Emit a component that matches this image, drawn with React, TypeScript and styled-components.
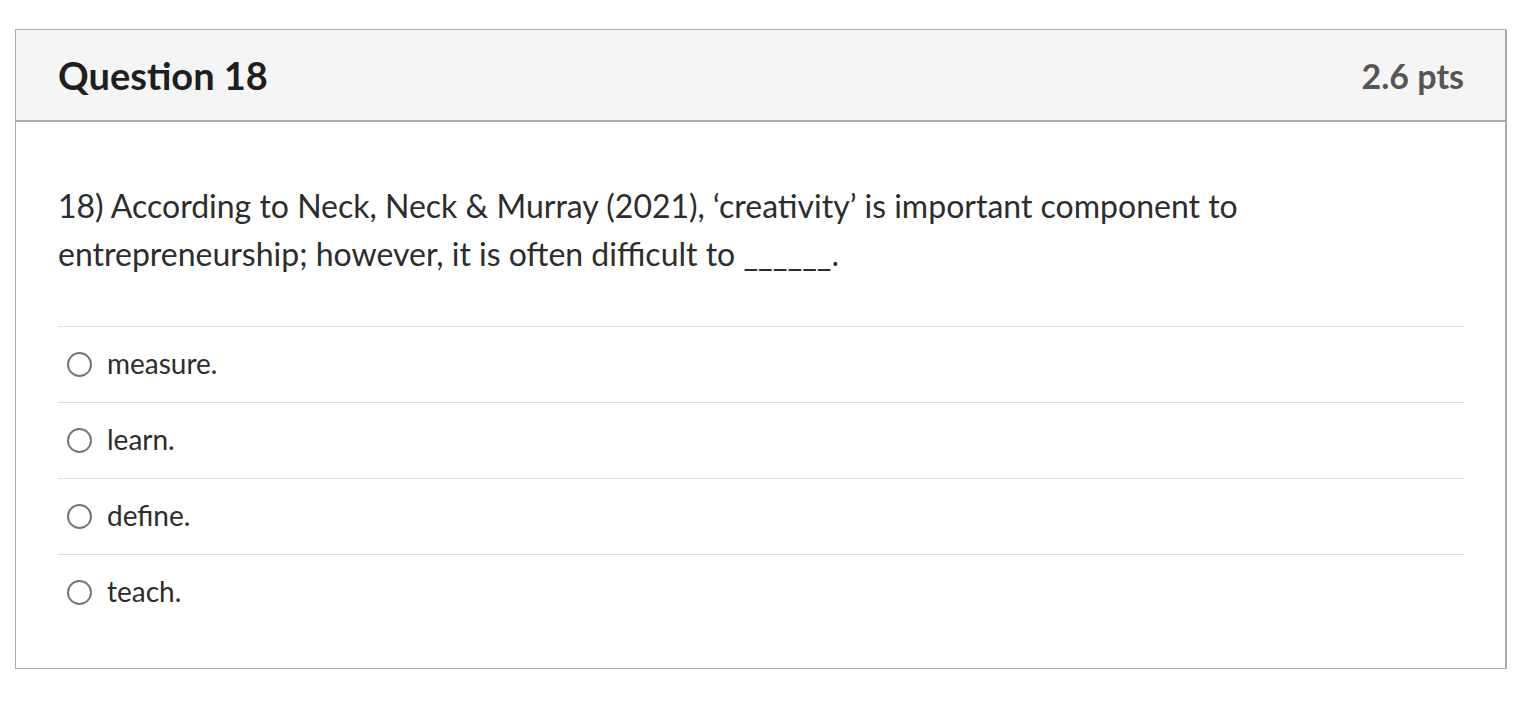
import React from 'react';
import styled, { createGlobalStyle } from 'styled-components';

const GlobalStyle = createGlobalStyle`
  body {
    margin: 0;
    background: #ffffff;
    font-family: Lato, "Open Sans", "Liberation Sans", sans-serif;
  }
`;

const answers = ['measure.', 'learn.', 'define.', 'teach.'];

const App: React.FC = () => {
  return (
    <>
      <GlobalStyle />
      <Page>
        <Card>
          <Header>
            <Title>Question 18</Title>
            <Points>2.6 pts</Points>
          </Header>
          <Body>
            <QuestionText>
              18) According to Neck, Neck &amp; Murray (2021), ‘creativity’ is important component to
              entrepreneurship; however, it is often difficult to ______.
            </QuestionText>
            <AnswerList>
              {answers.map(answer => (
                <AnswerRow key={answer}>
                  <Radio type="radio" name="q18" />
                  <AnswerLabel>{answer}</AnswerLabel>
                </AnswerRow>
              ))}
            </AnswerList>
          </Body>
        </Card>
      </Page>
    </>
  );
};

const Page = styled.div`
  padding: 29px 0 0 15px;
`;

const Card = styled.div`
  width: 1489px;
  border: 1px solid #aaaaaa;
  box-shadow: 1px 1px 0 #aaaaaa;
  background: #ffffff;
`;

const Header = styled.div`
  display: flex;
  align-items: center;
  justify-content: space-between;
  height: 90px;
  padding: 0 41px 0 42px;
  background: #f5f5f5;
  border-bottom: 2px solid #aaaaaa;
`;

const Title = styled.h2`
  margin: 0;
  font-size: 38px;
  font-weight: 700;
  color: #1f1f1f;
`;

const Points = styled.span`
  font-size: 34px;
  font-weight: 700;
  color: #555555;
`;

const Body = styled.div`
  padding: 60px 41px 38px 42px;
`;

const QuestionText = styled.p`
  margin: 0 0 48px;
  font-size: 32px;
  line-height: 48px;
  color: #2d2d2d;
  max-width: 1300px;
`;

const AnswerList = styled.div`
  display: flex;
  flex-direction: column;
`;

const AnswerRow = styled.label`
  display: flex;
  align-items: center;
  gap: 15px;
  height: 76px;
  padding: 0 0 4px 9px;
  box-sizing: border-box;
  border-top: 1px solid #dddddd;
`;

const Radio = styled.input`
  appearance: none;
  margin: 3px 0 0;
  width: 25px;
  height: 25px;
  border: 2px solid #767676;
  border-radius: 50%;
  background: #ffffff;
`;

const AnswerLabel = styled.span`
  font-size: 28px;
  color: #2d2d2d;
`;

export default App;
